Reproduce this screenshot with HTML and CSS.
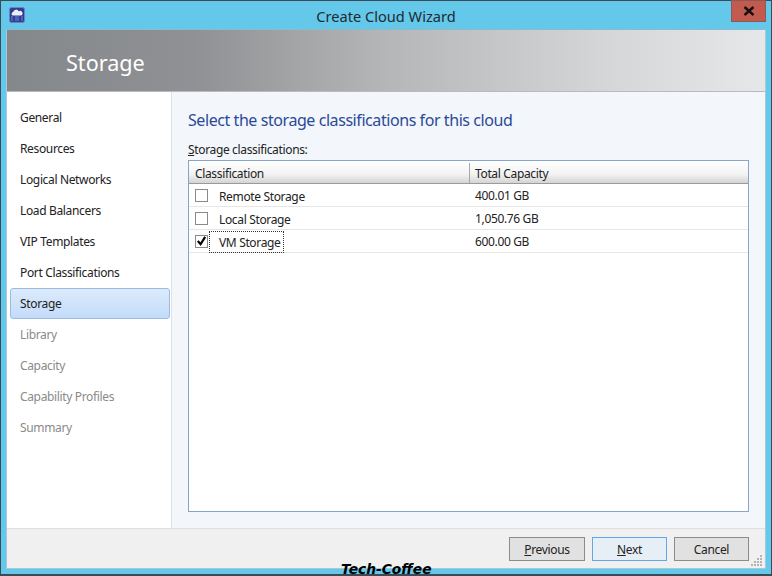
FILE: index.html
```html
<!DOCTYPE html>
<html lang="en">
<head>
<meta charset="utf-8">
<title>Create Cloud Wizard</title>
<link rel="stylesheet" href="styles.css">
</head>
<body>
<div class="window">
  <div class="titlebar">
    <svg class="appicon" width="16" height="16" viewBox="0 0 16 16">
      <rect x="0.5" y="0.5" width="15" height="15" rx="2" fill="#2c3f92" stroke="#6f7fc0"/>
      <rect x="2" y="9" width="12" height="5" fill="#4a62b8"/>
      <path d="M3.500 8.500a2 2 0 0 1 .6-3.600 3 3 0 0 1 5.600-.6 2.400 2.400 0 0 1 2.600 4.200z" fill="#e9eef8"/>
      <path d="M5 9v5M11 9v5" stroke="#16225c"/>
    </svg>
    <div class="wintitle">Create Cloud Wizard</div>
    <div class="close"><svg width="12" height="10" viewBox="0 0 12 10"><path d="M1.500 1 10.500 9M10.500 1 1.500 9" stroke="#111" stroke-width="2.400"/></svg></div>
  </div>
  <div class="client">
    <div class="banner"><span class="bannertext">Storage</span></div>
    <div class="middle">
      <nav class="nav">
        <div class="navitem">General</div>
        <div class="navitem">Resources</div>
        <div class="navitem">Logical Networks</div>
        <div class="navitem">Load Balancers</div>
        <div class="navitem">VIP Templates</div>
        <div class="navitem">Port Classifications</div>
        <div class="navitem active">Storage</div>
        <div class="navitem off">Library</div>
        <div class="navitem off">Capacity</div>
        <div class="navitem off">Capability Profiles</div>
        <div class="navitem off">Summary</div>
      </nav>
      <main class="page">
        <h1 class="heading">Select the storage classifications for this cloud</h1>
        <div class="label"><u>S</u>torage classifications:</div>
        <div class="grid">
          <div class="ghead">
            <div class="c1 hcell">Classification</div>
            <div class="c2 hcell">Total Capacity</div>
          </div>
          <div class="row">
            <div class="c1 cell"><span class="check"></span><span class="name">Remote Storage</span></div>
            <div class="c2 cell">400.01 GB</div>
          </div>
          <div class="row">
            <div class="c1 cell"><span class="check"></span><span class="name">Local Storage</span></div>
            <div class="c2 cell">1,050.76 GB</div>
          </div>
          <div class="row">
            <div class="c1 cell"><span class="check"><svg width="12" height="12" viewBox="0 0 12 12"><path d="M2 6 5 9.500 10 1.500" fill="none" stroke="#000" stroke-width="2.400"/></svg></span><span class="name focus">VM Storage</span></div>
            <div class="c2 cell">600.00 GB</div>
          </div>
        </div>
      </main>
    </div>
    <footer class="footer">
      <button class="btn wide"><u>P</u>revious</button>
      <button class="btn primary"><u>N</u>ext</button>
      <button class="btn">Cancel</button>
      <svg class="grip" width="12" height="12" viewBox="0 0 12 12" fill="#b4b4b4"><path d="M9 1h2v2H9zM6 4h2v2H6zM9 4h2v2H9zM3 7h2v2H3zM6 7h2v2H6zM9 7h2v2H9zM0 10h2v2H0zM3 10h2v2H3zM6 10h2v2H6zM9 10h2v2H9z"/></svg>
    </footer>
  </div>
  <div class="watermark">Tech-Coffee</div>
</div>
</body>
</html>
```

FILE: styles.css
```css
* { box-sizing: border-box; }
html, body { margin: 0; padding: 0; }
body { width: 772px; height: 576px; overflow: hidden; font-family: "Noto Sans", "Open Sans", sans-serif; font-size: 12px; letter-spacing: -0.35px; color: #222; }
.window { position: relative; width: 772px; height: 576px; background: #63c8ea; border: 1px solid #3b4a54; border-bottom-width: 2px; display: flex; flex-direction: column; padding: 0 5px 5px 5px; }
.titlebar { height: 28px; flex: none; display: flex; align-items: center; position: relative; }
.appicon { position: absolute; left: 3px; top: 6px; }
.wintitle { flex: 1; text-align: center; font-size: 14.6px; letter-spacing: 0; color: #1f2a30; padding-top: 1px; }
.close { position: absolute; right: 0; top: -1px; width: 35px; height: 22px; background: #c25a4f; border: 1px solid #8a5a5a; display: flex; align-items: center; justify-content: center; }
.client { flex: 1; display: flex; flex-direction: column; border: 1px solid #a9c9d6; border-top-color: #8fb9c9; min-height: 0; background: #f3f6fa; }
.banner { height: 62px; flex: none; background: linear-gradient(90deg, #85888b 0%, #8f9194 25%, #b4b6b7 50%, #d6d7d8 80%, #e6e7e9 100%); border-bottom: 1px solid #b9babb; display: flex; align-items: center; padding: 3px 0 0 59px; }
.bannertext { color: #fff; font-size: 21.600px; letter-spacing: 0; }
.middle { flex: 1; display: flex; min-height: 0; }
.nav { width: 165px; flex: none; background: #fff; border-right: 1px solid #dfe1e4; padding: 10px 1px 0 3px; }
.navitem { height: 31px; display: flex; align-items: center; padding-left: 10px; color: #222; }
.navitem.off { color: #8a8a8a; }
.navitem.active { background: linear-gradient(#dcebfc, #c3dbfa); border: 1px solid #9cbbe0; border-radius: 3px; padding-left: 9px; }
.page { flex: 1; padding: 15px 16px 16px 16px; display: flex; flex-direction: column; min-width: 0; }
.heading { margin: 0 0 7px 0; font-size: 16px; font-weight: 400; letter-spacing: -0.43px; color: #2a4a9a; line-height: 27px; }
.label { height: 17px; line-height: 17px; margin-bottom: 2px; }
.grid { flex: 1; background: #fff; border: 1px solid #86a5c8; }
.ghead { display: flex; height: 23px; padding-top: 2px; background: linear-gradient(#fff 0%, #f3f3f3 60%, #d4d4d4 100%); border-bottom: 1px solid #9a9a9a; }
.row { display: flex; height: 23px; border-bottom: 1px solid #e6e6e6; }
.c1 { width: 281px; flex: none; }
.c2 { flex: 1; }
.hcell { display: flex; align-items: center; padding-left: 6px; }
.c2.hcell { padding-left: 5px; }
.c1.hcell { border-right: 1px solid #a8a8a8; }
.cell { display: flex; align-items: center; }
.c1.cell { padding-left: 6px; }
.c2.cell { padding-left: 5px; }
.check { width: 13px; height: 13px; margin-right: 1px; border: 1px solid #8a8a8a; background: #fff; flex: none; display: flex; align-items: center; justify-content: center; }
.name { align-self: stretch; display: flex; align-items: center; padding: 0 3px 0 9px; border: 1px dotted transparent; margin-top: 1px; margin-bottom: -1px; }
.focus { border-color: #333; }
.footer { height: 40px; flex: none; background: #f0f0f0; border-top: 1px solid #dfdfdf; display: flex; align-items: flex-start; justify-content: flex-end; gap: 7px; padding: 8px 16px 0 0; position: relative; }
.btn { width: 75px; height: 24px; background: #e1e1e1; border: 1px solid #8c8c8c; font: inherit; letter-spacing: inherit; color: #222; padding: 0; }
.btn.wide { width: 76px; }
.btn.primary { background: #e6eef6; border-color: #62a8e6; }
.grip { position: absolute; right: 2px; bottom: 2px; }
.watermark { position: absolute; left: 340px; bottom: -2px; font-family: "DejaVu Sans", sans-serif; font-style: italic; font-weight: 700; font-size: 13.800px; letter-spacing: 0; color: #000; line-height: 14px; }
```
